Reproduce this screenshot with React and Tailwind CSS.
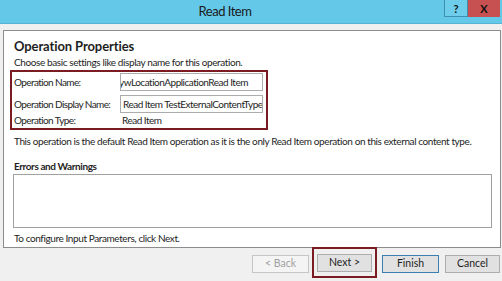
export default function App() {
  return (
    <div className="w-[502px] h-[281px] overflow-hidden bg-[#f0f0f0] text-[#1e1e1e] font-['Lato',sans-serif] flex flex-col">
      {/* Title bar */}
      <div className="relative h-[24px] shrink-0 bg-[#64c8e9] border-b border-[#58b4d4] flex items-center justify-center">
        <span className="ml-[-52px] text-[13px] tracking-[-0.5px] leading-none text-[#1a1a1a]">Read Item</span>
        <div className="absolute top-0 right-[2px] flex">
          <div className="w-[24px] h-[17px] bg-[#6fcdec] border border-[#3f8fb0] border-t-0 flex items-center justify-center text-[11px] font-bold leading-none text-[#111]">
            ?
          </div>
          <div className="w-[32px] h-[17px] bg-[#c75050] flex items-center justify-center text-[11px] font-bold leading-none text-[#111]">
            X
          </div>
        </div>
      </div>

      {/* Content panel */}
      <div className="mt-[6px] ml-[3px] w-[498px] h-[218px] shrink-0 bg-white border border-[#8c8c8c] flex flex-col px-[10px] text-[10px] tracking-[-0.4px]">
        <h1 className="mt-[6px] text-[13px] leading-[18px] font-bold tracking-[-0.1px]">Operation Properties</h1>
        <p className="mt-[1px] leading-[12px]">
          Choose basic settings like display name for this operation.
        </p>

        {/* Highlighted fields */}
        <div className="mt-[2px] -ml-[4px] w-[258px] h-[60px] border-2 border-[#7a1c22] flex flex-col pl-[2px]">
          <div className="mt-[1px] flex items-center h-[18px]">
            <span className="w-[106px] whitespace-nowrap tracking-[-0.6px]">Operation Name:</span>
            <div className="w-[143px] h-[18px] border border-[#acacac] overflow-hidden flex items-center">
              <span className="-ml-[2px] whitespace-nowrap tracking-[-0.5px]">ywLocationApplicationRead Item</span>
            </div>
          </div>
          <div className="mt-[4px] flex items-center h-[18px]">
            <span className="w-[106px] whitespace-nowrap tracking-[-0.6px]">Operation Display Name:</span>
            <div className="w-[143px] h-[18px] border border-[#acacac] overflow-hidden flex items-center pl-[2px]">
              <span className="whitespace-nowrap tracking-[-0.5px]">Read Item TestExternalContentType</span>
            </div>
          </div>
          <div className="flex items-center h-[16px]">
            <span className="w-[108px] whitespace-nowrap tracking-[-0.6px]">Operation Type:</span>
            <span className="tracking-[-0.5px]">Read Item</span>
          </div>
        </div>

        <p className="mt-[5px] leading-[12px] whitespace-nowrap">
          This operation is the default Read Item operation as it is the only Read Item operation on this external content type.
        </p>

        <p className="mt-[13px] leading-[12px] font-bold">Errors and Warnings</p>
        <div className="mt-[2px] -ml-[1px] w-[479px] h-[54px] border border-[#a0a0a0]" />

        <p className="mt-[4px] leading-[12px]">
          To configure Input Parameters, click Next.
        </p>
      </div>

      {/* Buttons */}
      <div className="mt-[-1px] flex items-center justify-end pr-[2px] text-[10.5px]">
        <button className="mt-[2px] w-[57px] h-[18px] bg-[#f4f4f4] border border-[#c6c6c6] text-[#a0a0a0]">&lt; Back</button>
        <div className="ml-[3px] p-[2px] border-2 border-[#7a1c22]">
          <button className="m-[1px] mt-[3px] mb-[2px] w-[55px] h-[18px] bg-[#e1e1e1] border border-[#adadad]">Next &gt;</button>
        </div>
        <button className="mt-[2px] ml-[5px] w-[57px] h-[18px] bg-[#e1e1e1] border border-[#3c7fb1]">Finish</button>
        <button className="mt-[2px] ml-[6px] w-[55px] h-[18px] bg-[#e1e1e1] border border-[#adadad]">Cancel</button>
      </div>
    </div>
  );
}
